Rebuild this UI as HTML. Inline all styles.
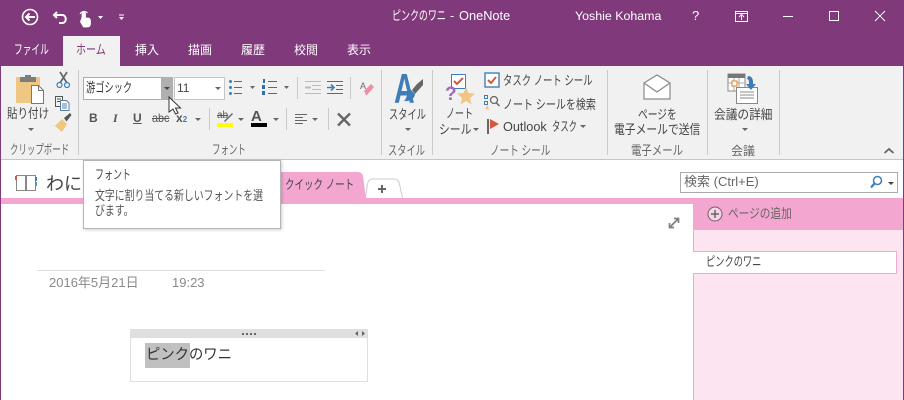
<!DOCTYPE html>
<html lang="ja"><head><meta charset="utf-8"><title>ピンクのワニ - OneNote</title>
<style>
html,body{margin:0;padding:0}
body{width:904px;height:400px;position:relative;overflow:hidden;background:#fff;font-family:"Liberation Sans","Noto Sans CJK JP",sans-serif;font-size:12px;color:#444}
div,svg{position:absolute}
.t{position:absolute;white-space:nowrap;line-height:16px;transform-origin:0 50%}
.k{font-size:13px}
.w{color:#fff}
.g{color:#666}
.sep{width:1px;background:#c9c9c9;top:70px;height:85px}
.arr{width:0;height:0;border:3px solid transparent;border-top:3px solid #666;border-bottom:0}
</style></head><body>
<!-- title bar -->
<div style="left:0;top:0;width:904px;height:66px;background:#80397b"></div>
<svg style="left:20px;top:7px" width="120" height="22" fill="none" stroke="#fff" stroke-width="1.6">
<circle cx="10" cy="10" r="7.500"/><path d="M15 10H6M9.500 6.500L6 10l3.500 3.500" stroke-width="2"/>
<path d="M34 8h8c5 0 5 8 0 8h-3M37 5l-3 3 3 3" stroke-width="2"/>
<path d="M62 10V6.500c0-2 3.500-2 3.500 0v4.500h2.500c2 0 2.500 1.500 2.500 3.500v2c0 2-1 3.500-3 3.500h-4l-3-5z" fill="#fff" stroke-width=".8"/>
<path d="M60 7a4.500 4.500 0 0 1 7.500-1" stroke-width="1"/>
<path d="M78 9h5l-2.500 3z M99 10h5l-2.500 3z" fill="#fff" stroke="none"/><path d="M99 8h5" stroke-width="1"/>
</svg>
<span class="t w k" style="left:392px;top:8px;transform:scaleX(.69)">ピンクのワニ</span>
<span class="t w" style="left:450px;top:8px;font-size:12.800px">-</span>
<span class="t w" style="left:459px;top:8px;font-size:12.800px">OneNote</span>
<span class="t w" style="left:575px;top:8px;font-size:12.400px">Yoshie Kohama</span>
<span class="t w" style="left:692px;top:8px;font-size:13px">?</span>
<svg style="left:730px;top:5px" width="165" height="20" fill="none" stroke="#fff" stroke-width="1">
<path d="M5.500 6.500h12v10h-12zM5.500 8.500h12M11.500 15v-5M9 12l2.500-2.500 2.500 2.500"/>
<path d="M53 11.500h10M99.500 6.500h9v9h-9zM145 6l10 10M155 6l-10 10"/>
</svg>
<!-- tabs -->
<div style="left:63px;top:36px;width:57px;height:31px;background:#f1f1f1"></div>
<span class="t w k" style="left:14px;top:42px;transform:scaleX(.67)">ファイル</span>
<span class="t k" style="left:76px;top:42px;color:#80397b;transform:scaleX(.77)">ホーム</span>
<span class="t w" style="left:135px;top:42px">挿入</span>
<span class="t w" style="left:188px;top:42px">描画</span>
<span class="t w" style="left:241px;top:42px">履歴</span>
<span class="t w" style="left:294px;top:42px">校閲</span>
<span class="t w" style="left:347px;top:42px">表示</span>
<!-- ribbon -->
<div style="left:0;top:66px;width:904px;height:93px;background:#f1f1f1;border-bottom:1px solid #c6c6c6"></div>
<div class="sep" style="left:78px"></div>
<div class="sep" style="left:381px"></div>
<div class="sep" style="left:432px"></div>
<div class="sep" style="left:607px"></div>
<div class="sep" style="left:707px"></div>
<div class="sep" style="left:779px"></div>
<!-- clipboard -->
<svg style="left:14px;top:72px" width="34" height="34"><rect x="2" y="5" width="24" height="26" rx="1" fill="#efc682"/><rect x="6" y="5" width="16" height="5" fill="#7d7d7d"/><rect x="11" y="3" width="6" height="3" fill="#7d7d7d"/><path d="M17.500 13.500h7l5 5v13h-12z" fill="#fff" stroke="#777"/><path d="M24.500 13.500v5h5" fill="none" stroke="#777"/></svg>
<span class="t k" style="left:7px;top:106px;transform:scaleX(.81)">貼り付け</span>
<div class="arr" style="left:28px;top:128px"></div>
<svg style="left:54px;top:71px" width="20" height="66" fill="none">
<path d="M6 1l7 11M13 1L6 12" stroke="#666" stroke-width="1.700"/><circle cx="5.500" cy="14" r="2.500" stroke="#3f7db8" stroke-width="1.200"/><circle cx="13" cy="14" r="2.500" stroke="#3f7db8" stroke-width="1.200"/>
<path d="M1.500 25.500h7v10h-7zM3 28h4M3 30.500h4" stroke="#555"/><path d="M6.500 29.500h6l2.500 2.500v7.500h-8.500z" fill="#fff" stroke="#5a7ea6"/><path d="M8 33h5M8 35h5M8 37h5" stroke="#5a7ea6"/>
<path d="M1 55l7-7 5 5-5 8z" fill="#efc682"/><path d="M10 47l6-5 1.500 2-5 6.500z" fill="#555"/>
</svg>
<span class="t g k" style="left:10px;top:142px;transform:scaleX(.65)">クリップボード</span>
<!-- font controls -->
<div style="left:83px;top:77px;width:77px;height:21px;background:#fff;border:1px solid #ababab"></div>
<div style="left:161px;top:77px;width:12px;height:23px;background:#b0b0b0"></div>
<div class="arr" style="left:164px;top:87px;border-top-color:#444"></div>
<span class="t k" style="left:86px;top:80px;color:#333;transform:scaleX(.71)">游ゴシック</span>
<div style="left:174px;top:77px;width:49px;height:21px;background:#fff;border:1px solid #c6c6c6"></div>
<span class="t" style="left:177px;top:80px">11</span>
<div class="arr" style="left:215px;top:87px"></div>
<svg style="left:228px;top:78px" width="62" height="18" stroke="#666" fill="none">
<path d="M6 3.500h8M6 9.500h8M6 15.500h8"/><g fill="#3f7db8" stroke="none"><circle cx="2.500" cy="3.500" r="1.500"/><circle cx="2.500" cy="9.500" r="1.500"/><circle cx="2.500" cy="15.500" r="1.500"/></g>
<path d="M40 3.500h9M40 9.500h9M40 15.500h9"/><g fill="#2f6fb0" stroke="none"><rect x="35" y="1" width="2" height="4"/><rect x="34" y="7" width="3" height="4"/><rect x="34" y="13" width="3" height="4"/></g>
<path d="M22 8h5l-2.500 3z M56 8h5l-2.500 3z" fill="#666" stroke="none"/>
</svg>
<div style="left:297px;top:77px;width:1px;height:22px;background:#c9c9c9"></div>
<svg style="left:304px;top:80px" width="42" height="15" fill="none" stroke="#bbb">
<path d="M8 1.500h9M8 5.500h9M8 9.500h9M1 13.500h16M1 1.500h16"/><path d="M1 7.500h6" stroke-width="2"/>
<path d="M23 1.500h16M32 5.500h7M32 9.500h7M23 13.500h16" stroke="#666"/><path d="M23 7.500h6M27 4.500l3 3-3 3" stroke="#3f7db8" stroke-width="1.600"/>
</svg>
<div style="left:350px;top:77px;width:1px;height:22px;background:#c9c9c9"></div>
<svg style="left:359px;top:80px" width="16" height="17"><path d="M5 11l7-7 3 3-7 8H7z" fill="#ec8fa5"/><text x="1" y="9" font-size="9" fill="#666" font-family="Liberation Sans">A</text></svg>
<span class="t" style="left:89px;top:110px;font-weight:bold;color:#555">B</span>
<span class="t" style="left:113px;top:110px;font-style:italic;font-weight:bold;font-family:'Liberation Serif',serif;color:#555">I</span>
<span class="t" style="left:133px;top:110px;font-weight:bold;text-decoration:underline;color:#555">U</span>
<span class="t" style="left:152px;top:110px;text-decoration:line-through;color:#555;transform:scaleX(.9)">abc</span>
<span class="t" style="left:176px;top:110px;font-weight:bold;color:#555">x<span style="font-size:8px;color:#3f7db8">2</span></span>
<div class="arr" style="left:195px;top:118px"></div>
<div style="left:209px;top:108px;width:1px;height:22px;background:#c9c9c9"></div>
<span class="t" style="left:217px;top:108px;font-size:10px;text-decoration:line-through;color:#555">ab</span>
<svg style="left:222px;top:111px" width="12" height="12"><path d="M2 10L10 2l1 1-8 8z" fill="#666"/></svg>
<div style="left:217px;top:123px;width:16px;height:4px;background:#ffff00"></div>
<div class="arr" style="left:238px;top:118px"></div>
<span class="t" style="left:251px;top:109px;font-size:15px;font-weight:bold;color:#555">A</span>
<div style="left:251px;top:123px;width:16px;height:4px;background:#000"></div>
<div class="arr" style="left:273px;top:118px"></div>
<div style="left:286px;top:108px;width:1px;height:22px;background:#c9c9c9"></div>
<svg style="left:295px;top:113px" width="25" height="12" stroke="#666" fill="none"><path d="M0 1.500h12M0 4.500h8M0 7.500h12M0 10.500h8"/><path d="M17 5h6l-3 3z" fill="#666" stroke="none"/></svg>
<div style="left:328px;top:108px;width:1px;height:22px;background:#c9c9c9"></div>
<svg style="left:336px;top:111px" width="16" height="16"><path d="M2 2.500l12 12M14 2.500l-12 12" stroke="#666" stroke-width="2.400"/></svg>
<span class="t g k" style="left:212px;top:142px;transform:scaleX(.65)">フォント</span>
<!-- style -->
<span class="t" style="left:394px;top:68px;font-size:42px;line-height:42px;font-weight:bold;color:#3f7db8;transform:scaleX(.68)">A</span>
<svg style="left:403px;top:78px" width="20" height="26"><path d="M14 6l6-5v6l-8 9-3-4z" fill="#666"/><path d="M8 12l4 4c0 4-5 8-11 7 3-2 3-10 7-11z" fill="#3f7db8"/></svg>
<span class="t k" style="left:389px;top:107px;transform:scaleX(.71)">スタイル</span>
<div class="arr" style="left:405px;top:128px"></div>
<span class="t g k" style="left:388px;top:143px;transform:scaleX(.71)">スタイル</span>
<!-- tags -->
<svg style="left:444px;top:73px" width="32" height="32"><rect x="7.500" y="1.500" width="14" height="14" fill="#fff" stroke="#3f7db8"/><path d="M10 8l3 3 6-6" fill="none" stroke="#d2593c" stroke-width="2"/><path d="M22 14l2.500 6 6.500.5-5 4.500 1.500 6.500-5.500-3.500-5.500 3.500 1.500-6.500-5-4.500 6.500-.5z" fill="#efc682"/></svg>
<span class="t" style="left:445px;top:87px;font-size:19px;font-weight:bold;color:#a066c0">?</span>
<span class="t k" style="left:446px;top:106px;transform:scaleX(.69)">ノート</span>
<span class="t k" style="left:439px;top:122px;transform:scaleX(.83)">シール</span>
<div class="arr" style="left:473px;top:128px"></div>
<span class="t g k" style="left:490px;top:143px;transform:scaleX(.74)">ノート シール</span>
<svg style="left:484px;top:72px" width="16" height="16"><rect x="1" y="1" width="14" height="14" fill="#fff" stroke="#3f7db8" stroke-width="1.400"/><path d="M4 8l3 3 5-6" fill="none" stroke="#d2593c" stroke-width="2"/></svg>
<span class="t k" style="left:503px;top:73px;transform:scaleX(.72)">タスク ノート シール</span>
<svg style="left:484px;top:94px" width="16" height="18" fill="none"><rect x="0.500" y="1.500" width="3" height="3" stroke="#3f7db8"/><rect x="0.500" y="7.500" width="3" height="3" stroke="#3f7db8"/><circle cx="10" cy="6" r="3.500" stroke="#666" stroke-width="1.300"/><path d="M12.500 9l3 3" stroke="#666" stroke-width="1.500"/><path d="M3 12l1.500 3H2z" fill="#efc682" stroke="#efc682"/></svg>
<span class="t k" style="left:503px;top:97px;transform:scaleX(.77)">ノート シールを検索</span>
<svg style="left:487px;top:118px" width="14" height="16"><rect x="0" y="1" width="2" height="15" fill="#666"/><path d="M3 1l9 5-9 5z" fill="#d2593c"/></svg>
<span class="t" style="left:503px;top:119px;font-size:12.700px">Outlook</span>
<span class="t k" style="left:552px;top:119px;transform:scaleX(.64)">タスク</span>
<div class="arr" style="left:580px;top:125px"></div>
<!-- mail -->
<svg style="left:643px;top:74px" width="28" height="26" fill="#fff" stroke="#8a8a8a" stroke-width="1.200"><path d="M1 9L14 1l13 8v16H1z"/><path d="M1 9l13 9 13-9" fill="none"/></svg>
<span class="t k" style="left:638px;top:107px;transform:scaleX(.75)">ページを</span>
<span class="t k" style="left:614px;top:122px;transform:scaleX(.83)">電子メールで送信</span>
<span class="t g k" style="left:631px;top:143px;transform:scaleX(.8)">電子メール</span>
<!-- meeting -->
<svg style="left:727px;top:73px" width="32" height="32"><rect x="1" y="1" width="17" height="17" fill="#fff" stroke="#888"/><rect x="1" y="1" width="17" height="4" fill="#777"/><path d="M1 10h17M7 5v13M12 5v13" stroke="#aaa"/><rect x="5" y="8" width="5" height="5" fill="#fff" stroke="#e0821e"/><rect x="9.500" y="14.500" width="21" height="16" fill="#fff" stroke="#888"/><path d="M13 19h14M13 22h14M13 25h14" stroke="#888"/><path d="M21 3c3 0 5 2 5 6v2h3l-5 6-5-6h3V9c0-2-1-3-2-3z" fill="#3f7db8"/></svg>
<span class="t k" style="left:714px;top:107px;transform:scaleX(.9)">会議の詳細</span>
<div class="arr" style="left:742px;top:128px"></div>
<span class="t g" style="left:731px;top:143px">会議</span>
<svg style="left:883px;top:147px" width="12" height="8" fill="none"><path d="M1.500 6L6 2l4.500 4" stroke="#666" stroke-width="1.800"/></svg>
<!-- notebook bar -->
<svg style="left:15px;top:173px" width="24" height="20" fill="none" stroke="#888"><path d="M1.500 2.500h9v15h-9zM11.500 2.500h9v15h-9z"/><rect x="0" y="3" width="2" height="4" fill="#d2593c" stroke="none"/><rect x="20" y="4" width="2" height="4" fill="#3f7db8" stroke="none"/><rect x="20" y="9" width="2" height="4" fill="#5b9a8b" stroke="none"/></svg>
<span class="t" style="left:46px;top:173px;font-size:18px;line-height:22px">わにち</span>
<div style="left:1px;top:198px;width:692px;height:6px;background:#f3a6d0"></div>
<svg style="left:270px;top:172px" width="100" height="27"><path d="M0 0H87q5 0 6 4l3 23H0z" fill="#f3a6d0"/></svg>
<span class="t k" style="left:285px;top:177px;transform:scaleX(.73)">クイック ノート</span>
<svg style="left:364px;top:178px" width="40" height="21"><path d="M1.500 20L3.500 6q1-5 5-5h22q4 0 5 5l3 14" fill="#fff" stroke="#ccc"/><path d="M14 11h8M18 7v8" stroke="#666" stroke-width="2"/></svg>
<!-- search -->
<div style="left:680px;top:172px;width:216px;height:19px;background:#fff;border:1px solid #ababab"></div>
<span class="t g" style="left:684px;top:174px;font-size:13px">検索 (Ctrl+E)</span>
<svg style="left:868px;top:175px" width="28" height="14" fill="none"><circle cx="9.500" cy="5.500" r="4" stroke="#3f7db8" stroke-width="1.500"/><path d="M6.500 8.500L3 12.500" stroke="#3f7db8" stroke-width="2.200"/><path d="M20 7h6l-3 3z" fill="#444"/></svg>
<!-- right pane -->
<div style="left:693px;top:198px;width:211px;height:32px;background:#f3a6d0"></div>
<div style="left:693px;top:230px;width:211px;height:170px;background:#fce4f1"></div>
<div style="left:693px;top:204px;width:1px;height:196px;background:#f3a6d0"></div>
<svg style="left:707px;top:206px" width="16" height="16" fill="none" stroke="#666"><circle cx="8" cy="8" r="7" fill="#fff" fill-opacity=".5"/><path d="M4 8h8M8 4v8" stroke-width="1.500"/></svg>
<span class="t g k" style="left:728px;top:206px;transform:scaleX(.82)">ページの追加</span>
<div style="left:693px;top:251px;width:203px;height:21px;background:#fff;border:1px solid #f3a6d0;border-left:0"></div>
<span class="t k" style="left:706px;top:254px;transform:scaleX(.71)">ピンクのワニ</span>
<svg style="left:667px;top:216px" width="14" height="14" fill="none" stroke="#808080" stroke-width="1.700"><path d="M2.500 11.500l9-9M7 2.500h4.500V7M2.500 7v4.500H7"/></svg>
<!-- window borders -->
<div style="left:0;top:66px;width:1px;height:334px;background:#80397b"></div>
<div style="left:903px;top:66px;width:1px;height:334px;background:#80397b"></div>
<!-- tooltip -->
<div style="left:83px;top:160px;width:196px;height:67px;background:#fff;border:1px solid #b5b5b5;box-shadow:1px 1px 3px rgba(0,0,0,.2)"></div>
<span class="t k" style="left:95px;top:167px;transform:scaleX(.69)">フォント</span>
<span class="t k" style="left:95px;top:188px;color:#555;transform:scaleX(.76)">文字に割り当てる新しいフォントを選</span>
<span class="t k" style="left:95px;top:203px;color:#555;transform:scaleX(.76)">びます。</span>
<!-- cursor -->
<svg style="left:168px;top:96px" width="14" height="20"><path d="M1 1v15l4-3 2.500 5 2.500-1-2.500-5h5z" fill="#fff" stroke="#333"/></svg>
<!-- page -->
<div style="left:37px;top:270px;width:288px;height:1px;background:#dfdfdf"></div>
<span class="t" style="left:49px;top:275px;font-size:13px;color:#8a8a8a">2016年5月21日</span>
<span class="t" style="left:172px;top:275px;font-size:13px;color:#8a8a8a">19:23</span>
<div style="left:130px;top:329px;width:236px;height:51px;border:1px solid #dfdfdf"></div>
<div style="left:130px;top:329px;width:238px;height:9px;background:#dfdfdf"></div>
<svg style="left:240px;top:329px" width="128" height="9" fill="#666"><path d="M2 4h2v2H2zM6 4h2v2H6zM10 4h2v2h-2zM14 4h2v2h-2z"/><path d="M118 2v5l-3-2.500zM122 2v5l3-2.500z"/></svg>
<div style="left:145px;top:343px;width:45px;height:25px;background:#c0c0c0"></div>
<span class="t" style="left:146px;top:346px;font-size:15px;line-height:18px;color:#333;transform:scaleX(.955)">ピンクのワニ</span>
</body></html>
